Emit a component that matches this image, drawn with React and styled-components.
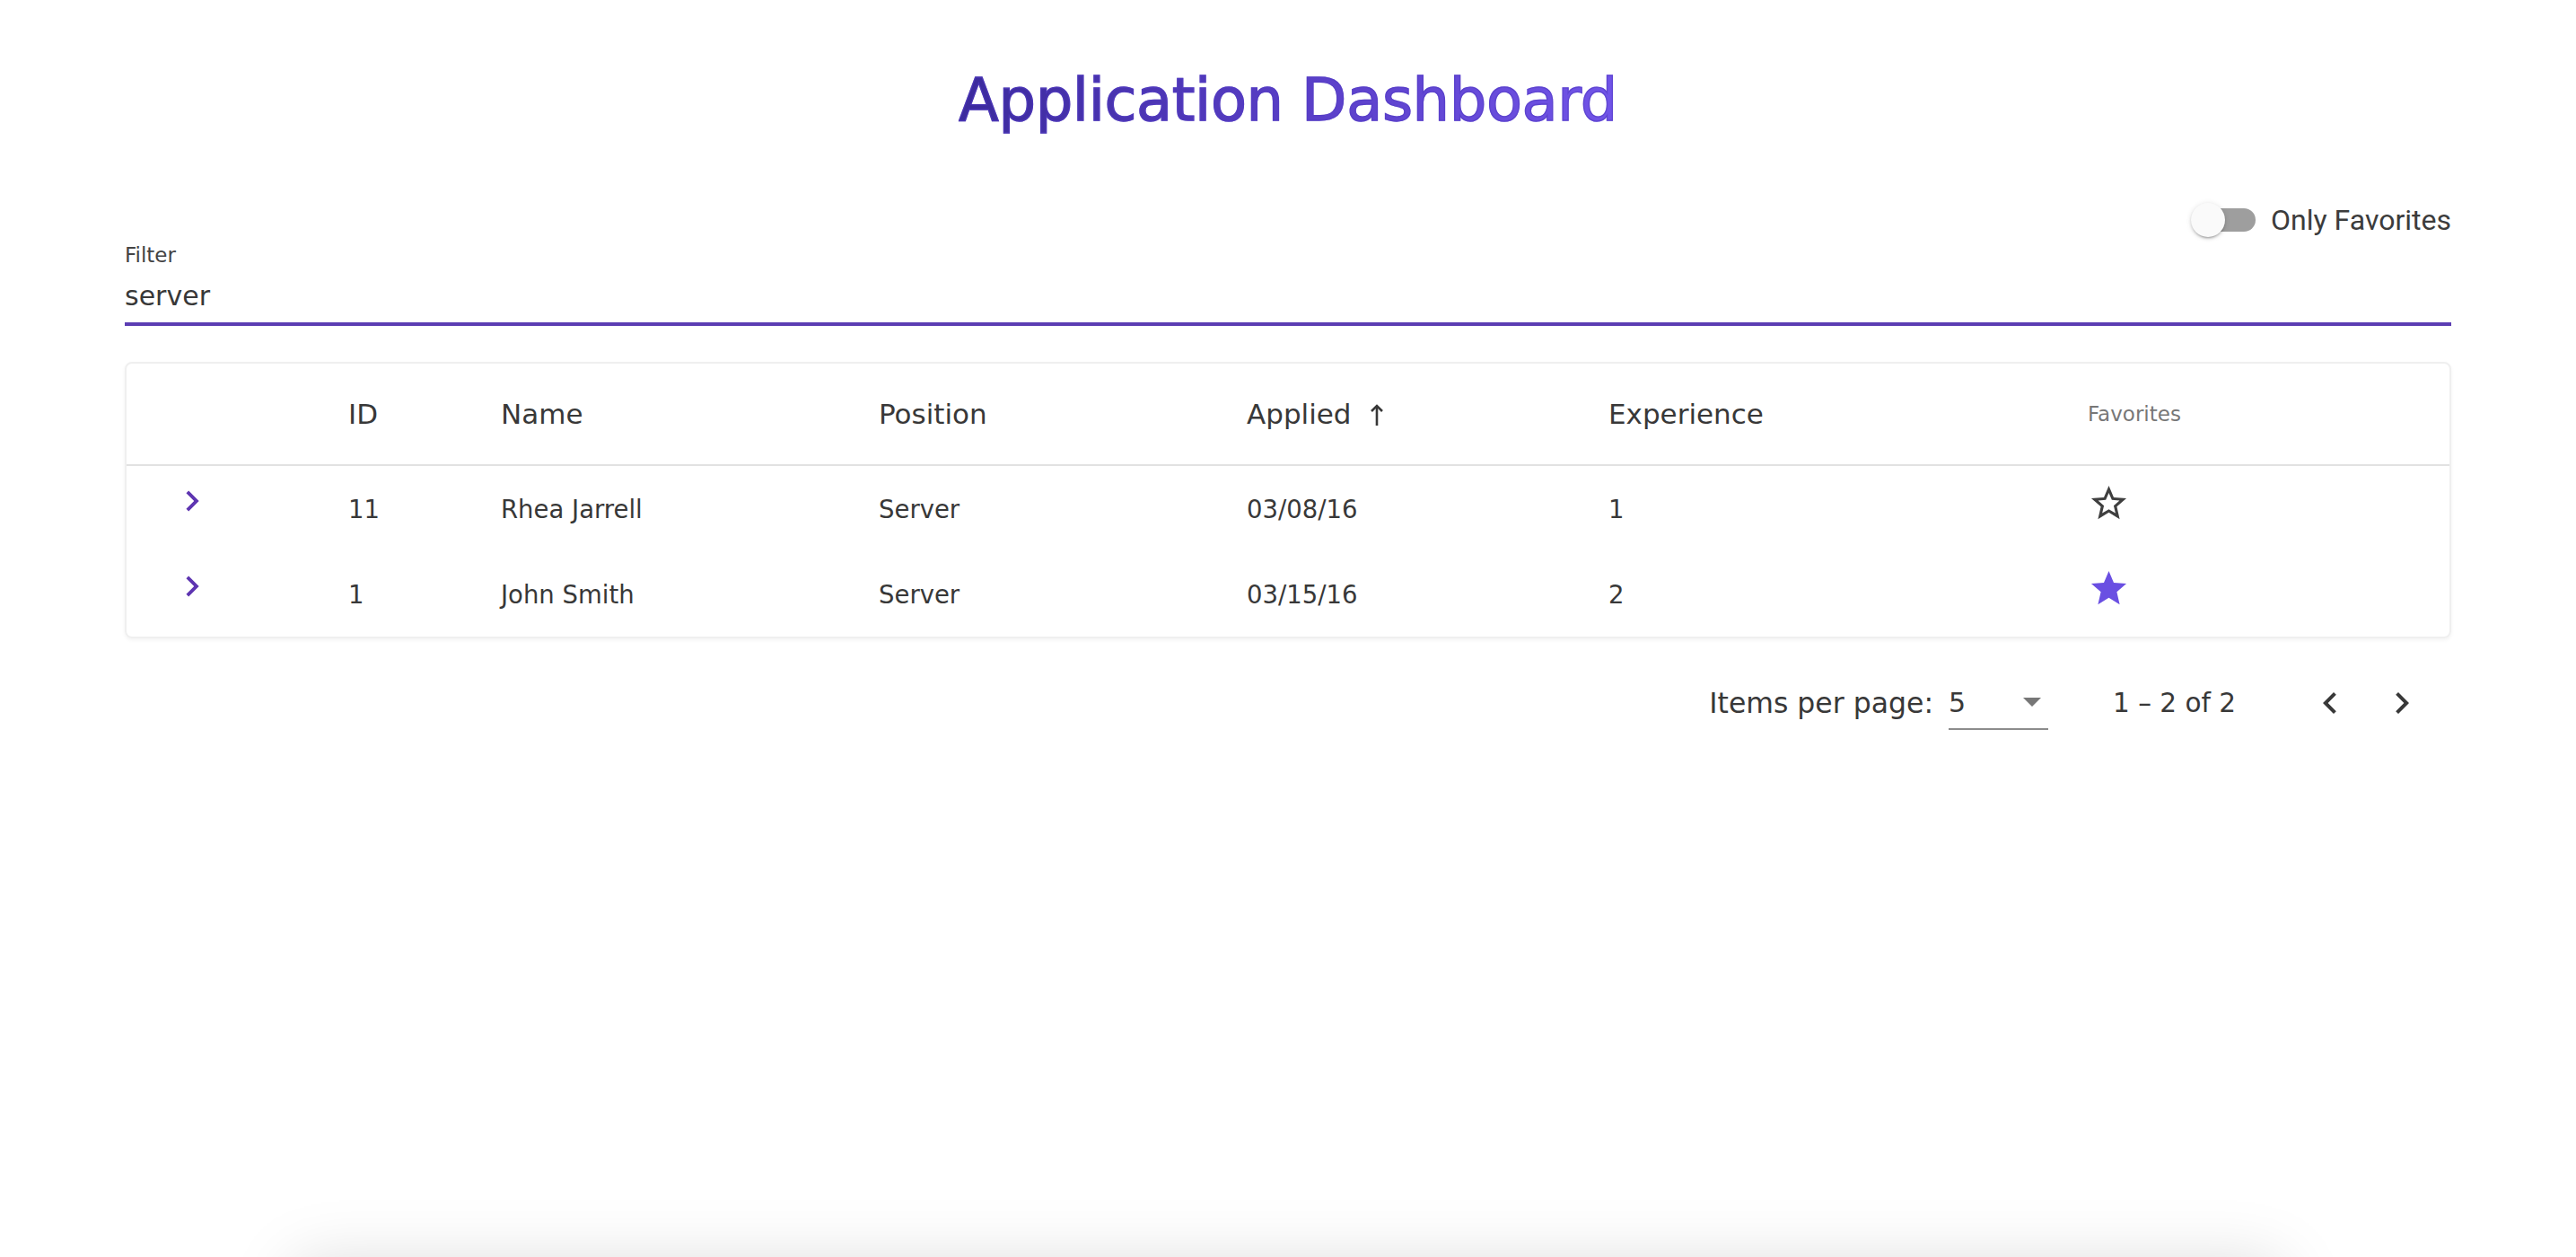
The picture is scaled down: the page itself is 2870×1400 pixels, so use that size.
import React, { useState } from 'react';
import styled, { createGlobalStyle } from 'styled-components';

const GlobalStyle = createGlobalStyle`
  body {
    margin: 0;
    background: #ffffff;
    font-family: "DejaVu Sans", "Noto Sans", sans-serif;
    color: #383838;
  }
`;

const Page = styled.div`
  width: 2592px;
  margin: 0 auto;
  padding-top: 73px;
`;

const Title = styled.h1`
  margin: 0;
  text-align: center;
  font-size: 65.5px;
  line-height: 76px;
  font-weight: 400;
  letter-spacing: -0.4px;

  span {
    background: linear-gradient(90deg, #3b2a9c 0%, #5b40c9 55%, #7154e8 100%);
    -webkit-background-clip: text;
    background-clip: text;
    color: transparent;
    -webkit-text-stroke: 1.3px rgba(84, 60, 196, 0.6);
  }
`;

const ToggleRow = styled.div`
  margin-top: 76px;
  height: 40px;
  display: flex;
  justify-content: flex-end;
  align-items: center;
  gap: 17px;
`;

const Track = styled.div`
  position: relative;
  width: 68px;
  height: 26px;
  border-radius: 13px;
  background: ${(p) => (p.$on ? '#b39ddb' : '#9e9e9e')};
  margin-left: 4px;
  cursor: pointer;
`;

const Thumb = styled.div`
  position: absolute;
  top: -6px;
  left: ${(p) => (p.$on ? '34px' : '-4px')};
  width: 38px;
  height: 38px;
  border-radius: 50%;
  background: ${(p) => (p.$on ? '#5e35b1' : '#fafafa')};
  box-shadow: 0 3px 2px -2px rgba(0, 0, 0, 0.2), 0 2px 3px rgba(0, 0, 0, 0.14),
    0 1px 6px rgba(0, 0, 0, 0.12);
`;

const ToggleLabel = styled.span`
  font-family: Roboto, "Liberation Sans", sans-serif;
  font-size: 32px;
  color: #3c3c3c;
`;

const Field = styled.div`
  margin-top: 5px;
`;

const FieldLabel = styled.label`
  display: block;
  font-size: 23px;
  line-height: 28px;
  color: #444;
`;

const FieldInput = styled.input`
  display: block;
  width: 100%;
  margin: 12px 0 0;
  padding: 0;
  border: none;
  outline: none;
  background: transparent;
  font-family: inherit;
  font-size: 30px;
  line-height: 40px;
  height: 40px;
  color: #383838;
`;

const Underline = styled.div`
  margin-top: 9px;
  height: 4px;
  background: #5c3db3;
`;

const Card = styled.div`
  margin-top: 40px;
  border: 2px solid #efefef;
  border-radius: 8px;
  box-shadow: 0 2px 4px rgba(0, 0, 0, 0.05);
  overflow: hidden;
`;

const Row = styled.div`
  display: grid;
  grid-template-columns: 247px 170px 421px 410px 403px 534px 1fr;
  align-items: center;
  height: ${(p) => (p.$head ? '112px' : '95px')};
  border-bottom: ${(p) => (p.$head ? '2px solid #e2e2e2' : 'none')};
`;

const HeadCell = styled.div`
  display: flex;
  align-items: center;
  gap: 19px;
  font-size: ${(p) => (p.$small ? '23px' : '31px')};
  color: ${(p) => (p.$small ? '#777' : '#383838')};
`;

const Cell = styled.div`
  font-size: 27.5px;
  color: #383838;
`;

const IconCell = styled.div`
  display: flex;
  align-items: center;
  padding-bottom: ${(p) => p.$lift || 0}px;
  padding-left: ${(p) => p.$indent || 0}px;

  svg {
    display: block;
  }
`;

const Paginator = styled.div`
  margin-top: 16px;
  height: 112px;
  display: flex;
  justify-content: flex-end;
  align-items: center;
  padding-right: 17px;
  color: #383838;
`;

const PerPage = styled.span`
  font-size: 31.5px;
  margin-right: 17px;
`;

const Select = styled.div`
  width: 111px;
  height: 60px;
  box-sizing: border-box;
  border-bottom: 2px solid #8c8c8c;
  display: flex;
  align-items: center;
  justify-content: space-between;
  padding-right: 8px;
  margin-right: 72px;
  font-size: 30px;
`;

const Caret = styled.span`
  width: 0;
  height: 0;
  border-left: 10px solid transparent;
  border-right: 10px solid transparent;
  border-top: 10px solid #777;
`;

const Range = styled.span`
  font-size: 29.5px;
  margin-right: 67px;
`;

const PageButton = styled.button`
  width: 76px;
  height: 76px;
  border: none;
  background: none;
  padding: 0;
  display: flex;
  align-items: center;
  justify-content: center;
  cursor: pointer;
  & + & {
    margin-left: 4px;
  }
`;

const BottomPanel = styled.div`
  width: 2200px;
  height: 300px;
  margin: 575px auto 0;
  box-shadow: 0 0 70px 6px rgba(0, 0, 0, 0.15);
  background: #fff;
`;

const Chevron = ({ dir = 'right', size = 46, color = '#383838' }) => (
  <svg width={size} height={size} viewBox="0 0 24 24" fill={color}>
    {dir === 'right' ? (
      <path d="M10 6L8.59 7.41 13.17 12l-4.58 4.59L10 18l6-6z" />
    ) : (
      <path d="M15.41 7.41L14 6l-6 6 6 6 1.41-1.41L10.83 12z" />
    )}
  </svg>
);

const Star = ({ filled }) => (
  <svg width="47" height="47" viewBox="0 0 24 24" fill={filled ? '#6a4fe2' : '#3f3f3f'}>
    {filled ? (
      <path d="M12 17.27L18.18 21l-1.64-7.03L22 9.24l-7.19-.61L12 2 9.19 8.63 2 9.24l5.46 4.73L5.82 21z" />
    ) : (
      <path d="M22 9.24l-7.19-.62L12 2 9.19 8.63 2 9.24l5.46 4.73L5.82 21 12 17.27 18.18 21l-1.63-7.03L22 9.24zM12 15.4l-3.76 2.27 1-4.28-3.32-2.88 4.38-.38L12 6.1l1.71 4.04 4.38.38-3.32 2.88 1 4.28L12 15.4z" />
    )}
  </svg>
);

const SortArrow = () => (
  <svg width="18" height="25" viewBox="0 0 18 25" fill="none" stroke="#383838" strokeWidth="2.6">
    <path d="M9 3v22" />
    <path d="M3 9l6-6 6 6" />
  </svg>
);

const applicants = [
  { id: 11, name: 'Rhea Jarrell', position: 'Server', applied: '03/08/16', experience: 1, favorite: false },
  { id: 1, name: 'John Smith', position: 'Server', applied: '03/15/16', experience: 2, favorite: true },
];

export default function App() {
  const [onlyFavorites, setOnlyFavorites] = useState(false);
  const [filter, setFilter] = useState('server');

  return (
    <>
      <GlobalStyle />
      <Page>
        <Title>
          <span>Application Dashboard</span>
        </Title>

        <ToggleRow>
          <Track $on={onlyFavorites} onClick={() => setOnlyFavorites(!onlyFavorites)}>
            <Thumb $on={onlyFavorites} />
          </Track>
          <ToggleLabel>Only Favorites</ToggleLabel>
        </ToggleRow>

        <Field>
          <FieldLabel htmlFor="filter">Filter</FieldLabel>
          <FieldInput id="filter" value={filter} onChange={(e) => setFilter(e.target.value)} />
          <Underline />
        </Field>

        <Card>
          <Row $head>
            <div />
            <HeadCell>ID</HeadCell>
            <HeadCell>Name</HeadCell>
            <HeadCell>Position</HeadCell>
            <HeadCell>
              Applied <SortArrow />
            </HeadCell>
            <HeadCell>Experience</HeadCell>
            <HeadCell $small>Favorites</HeadCell>
          </Row>
          {applicants.map((a) => (
            <Row key={a.id}>
              <IconCell $indent={50} $lift={17}>
                <Chevron color="#5e35b1" />
              </IconCell>
              <Cell>{a.id}</Cell>
              <Cell>{a.name}</Cell>
              <Cell>{a.position}</Cell>
              <Cell>{a.applied}</Cell>
              <Cell>{a.experience}</Cell>
              <IconCell $lift={12}>
                <Star filled={a.favorite} />
              </IconCell>
            </Row>
          ))}
        </Card>

        <Paginator>
          <PerPage>Items per page:</PerPage>
          <Select>
            <span>5</span>
            <Caret />
          </Select>
          <Range>1 – 2 of 2</Range>
          <PageButton aria-label="Previous page">
            <Chevron dir="left" size={48} />
          </PageButton>
          <PageButton aria-label="Next page">
            <Chevron dir="right" size={48} />
          </PageButton>
        </Paginator>

        <BottomPanel />
      </Page>
    </>
  );
}
